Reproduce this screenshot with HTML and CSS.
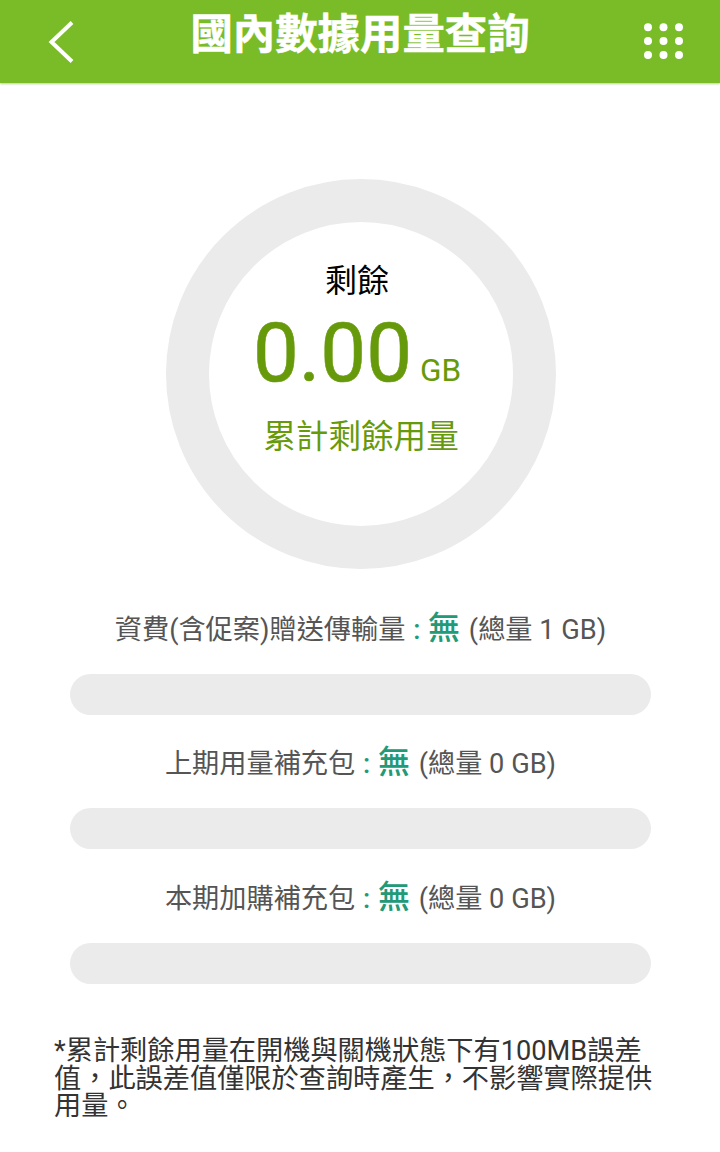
FILE: index.html
```html
<!DOCTYPE html>
<html lang="zh-Hant">
<head>
<meta charset="utf-8">
<title>國內數據用量查詢</title>
<link rel="stylesheet" href="styles.css">
</head>
<body>
<header class="topbar">
  <svg class="back" viewBox="0 0 28 44"><path d="M25 2.500 4.500 22 25 41.500"/></svg>
  <h1 class="title">國內數據用量查詢</h1>
  <svg class="menu" viewBox="0 0 42 38"><g><circle cx="5" cy="5.300" r="4"/><circle cx="20.500" cy="5.300" r="4"/><circle cx="36" cy="5.300" r="4"/><circle cx="5" cy="19" r="4"/><circle cx="20.500" cy="19" r="4"/><circle cx="36" cy="19" r="4"/><circle cx="5" cy="33" r="4"/><circle cx="20.500" cy="33" r="4"/><circle cx="36" cy="33" r="4"/></g></svg>
</header>
<main>
  <section class="ring">
    <div class="label">剩餘</div>
    <div class="amount"><span class="number">0.00</span><span class="unit">GB</span></div>
    <div class="caption">累計剩餘用量</div>
  </section>
  <section class="plans">
    <div class="plan"><p class="line">資費(含促案)贈送傳輸量<span class="value"> : <b>無</b></span> (總量 1 GB)</p><div class="bar"></div></div>
    <div class="plan"><p class="line">上期用量補充包<span class="value"> : <b>無</b></span> (總量 0 GB)</p><div class="bar"></div></div>
    <div class="plan"><p class="line">本期加購補充包<span class="value"> : <b>無</b></span> (總量 0 GB)</p><div class="bar"></div></div>
  </section>
  <p class="note">*累計剩餘用量在開機與關機狀態下有100MB誤差<br>值，此誤差值僅限於查詢時產生，不影響實際提供<br>用量。</p>
</main>
</body>
</html>
```
FILE: styles.css
```css
* { box-sizing: border-box; }
body { margin: 0; background: #fff; font-family: Roboto, "Noto Sans CJK TC", sans-serif; }
.topbar { height: 82.5px; background: #79bc28; box-shadow: 0 1px 2px #b5cf9a; display: flex; justify-content: space-between; padding: 0 35px 0 47px; }
.back { width: 28px; height: 44px; margin-top: 20px; fill: none; stroke: #fff; stroke-width: 4; }
.title { margin: 0 0 0 2px; font-size: 42.4px; line-height: 70px; font-weight: 700; color: #fff; -webkit-text-stroke: 0.5px #fff; }
.menu { width: 42px; height: 38px; margin-top: 22px; fill: #fff; }
.ring { width: 390px; height: 390px; margin: 96px 0 0 166px; border: 43px solid #ebebeb; border-radius: 50%; display: flex; flex-direction: column; align-items: center; padding-top: 35px; }
.label { font-size: 32px; line-height: 48px; color: #000; margin-right: 8px; }
.amount { display: flex; align-items: baseline; color: #679a0b; line-height: 96px; height: 96px; margin: 0 8px 0 0; }
.number { font-size: 81.6px; -webkit-text-stroke: 0.6px #679a0b; }
.unit { font-size: 31.5px; margin-left: 8px; }
.caption { font-size: 32.6px; line-height: 48px; color: #679a0b; margin-top: 12px; }
.plans { padding: 35.5px 69px 0 70px; }
.plan { height: 134.3px; }
.line { margin: 0; height: 70px; padding-top: 1px; line-height: 47px; font-size: 27.2px; color: #555; text-align: center; white-space: nowrap; }
.value { color: #229977; margin: 0 2px 0 1px; font-weight: 500; }
.value b { font-size: 32px; font-weight: 500; margin-left: 1px; }
.bar { height: 41px; border-radius: 21px; background: #ebebeb; }
.note { margin: 31.5px 0 0 54px; font-size: 27.2px; line-height: 27.2px; color: #333; white-space: nowrap; }
```
